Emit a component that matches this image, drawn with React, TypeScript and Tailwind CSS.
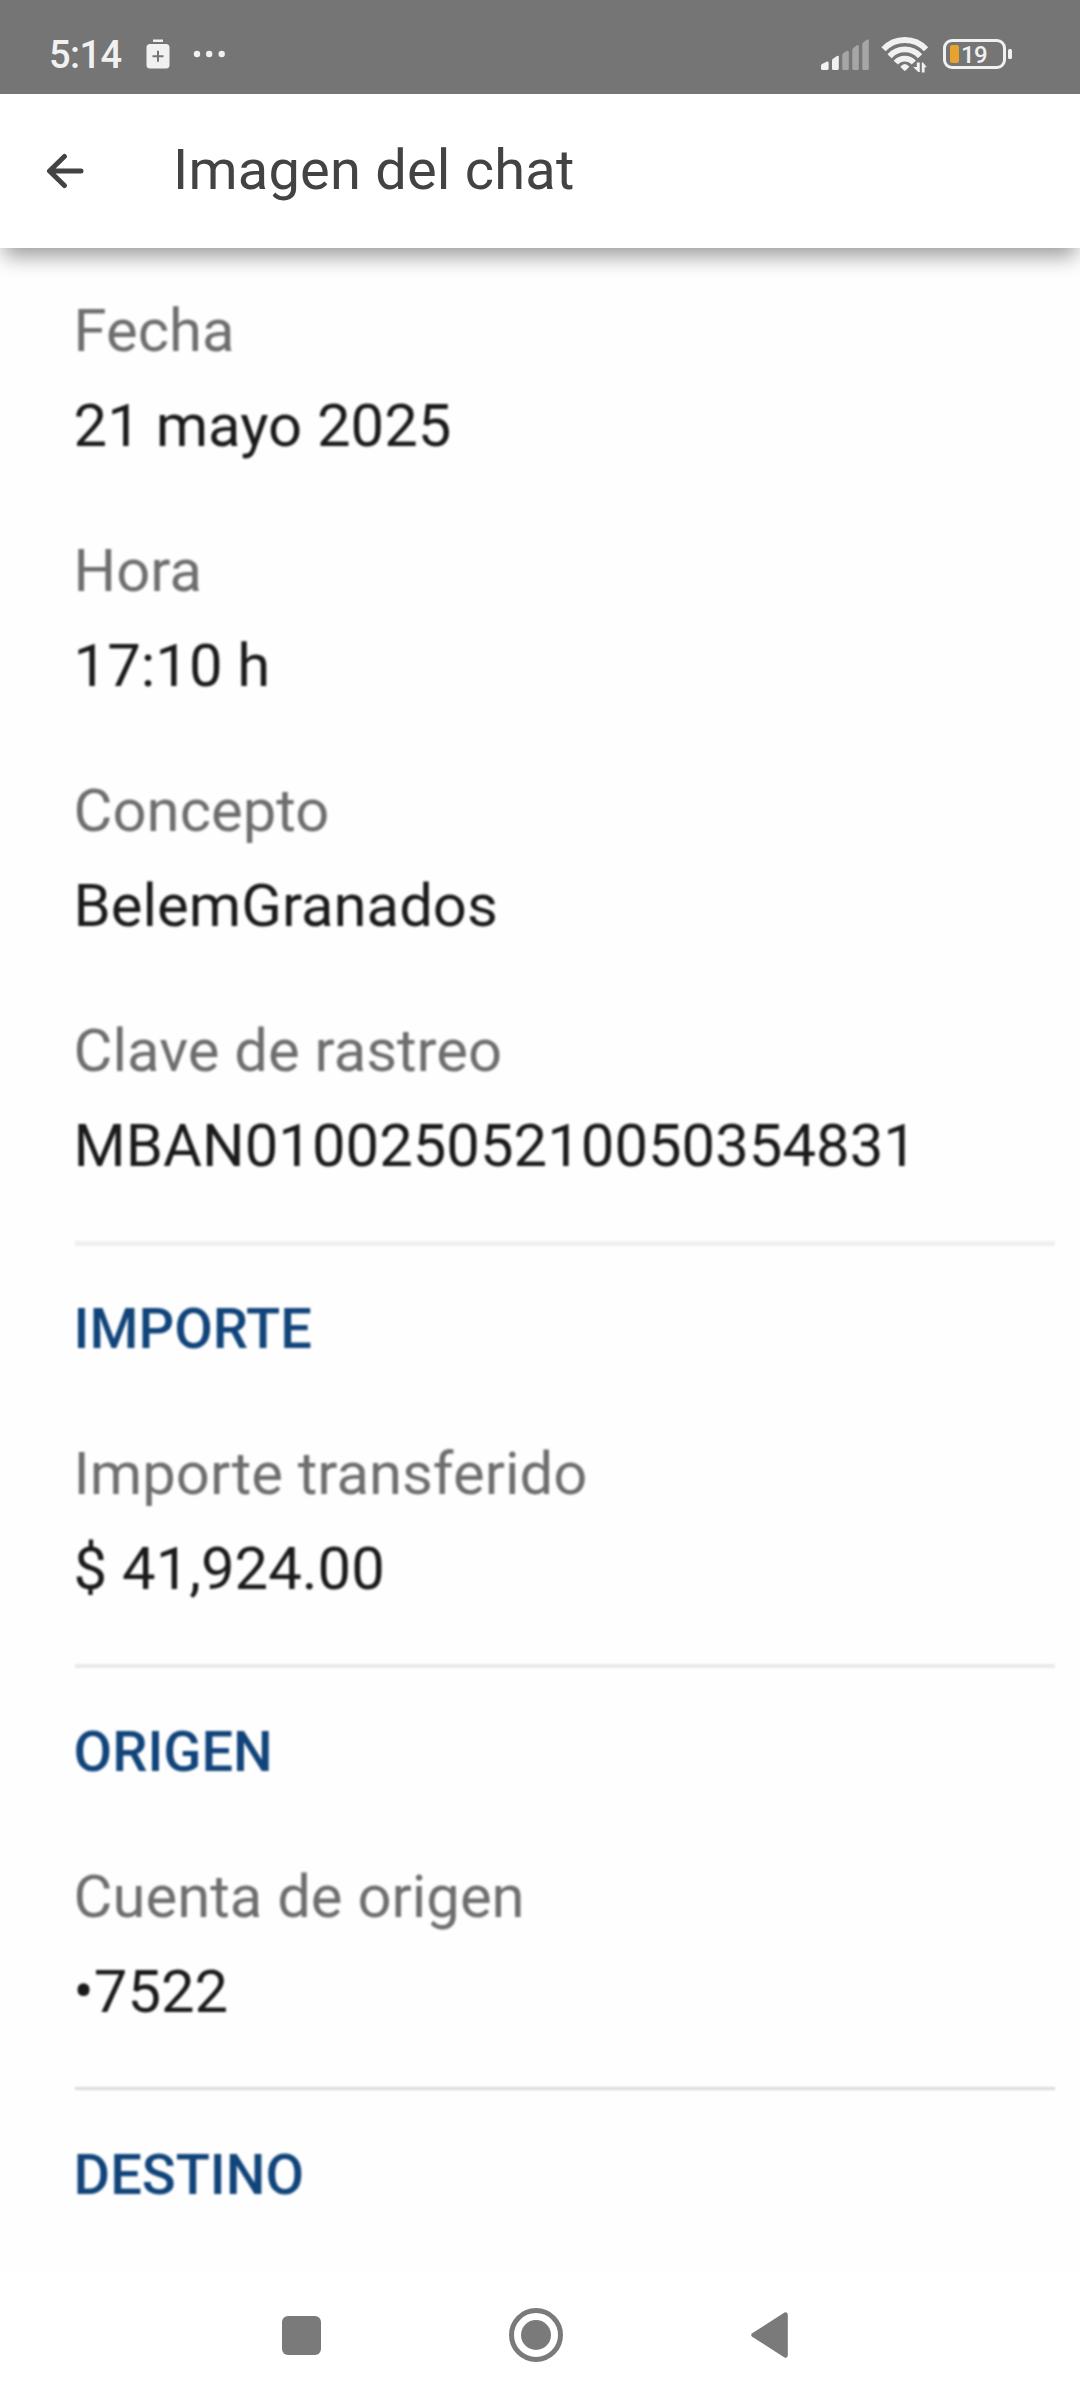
import React from "react";

type Item = { label: string; value: string };
type Section = { title?: string; line?: string; items: Item[] };

const sections: Section[] = [
  {
    items: [
      { label: "Fecha", value: "21 mayo 2025" },
      { label: "Hora", value: "17:10 h" },
      { label: "Concepto", value: "BelemGranados" },
      { label: "Clave de rastreo", value: "MBAN01002505210050354831" },
    ],
  },
  {
    title: "IMPORTE",
    line: "h-[5px] bg-[#efefef]",
    items: [{ label: "Importe transferido", value: "$ 41,924.00" }],
  },
  {
    title: "ORIGEN",
    line: "h-[4px] mb-px bg-[#e9e9e9]",
    items: [{ label: "Cuenta de origen", value: "•7522" }],
  },
  { title: "DESTINO", line: "h-[3px] mb-[2px] bg-[#dadada]", items: [] },
];

function StatusBar() {
  return (
    <div className="relative z-20 flex h-[94px] shrink-0 items-start justify-between bg-[#757575] pl-[49px] pr-[68px] pt-[35px] text-[#f1f1f1]">
      <div className="flex">
        <span className="w-[97px] text-[38px] leading-[41px] font-medium tracking-[-0.6px]">5:14</span>
        <svg width="24" height="36" viewBox="146 35 24 36">
          <rect x="153" y="39.5" width="10" height="2.5" fill="currentColor" />
          <rect x="146.5" y="44" width="23" height="24.5" rx="3.5" fill="currentColor" />
          <path d="M152.5 56.2h11M158 50.7v11" stroke="#757575" strokeWidth="2" />
        </svg>
        <svg className="ml-[23px]" width="34" height="36" viewBox="193 35 34 36">
          <circle cx="197" cy="54" r="3.2" fill="currentColor" />
          <circle cx="209.2" cy="54" r="3.2" fill="currentColor" />
          <circle cx="221.7" cy="54" r="3.2" fill="currentColor" />
        </svg>
      </div>
      <div className="flex">
        <svg width="50" height="40" viewBox="820 35 50 40">
          <path d="M821 65.5 Q821 64.5 822 64 L827 61.6 Q828.6 61.2 828.6 63 V68.5 Q828.6 70 827 70 H822.5 Q821 70 821 68.5Z" fill="currentColor" />
          <path d="M832 60.5 Q832 59.4 833 58.7 L837 56 Q838.8 55.3 838.8 57 V68.5 Q838.8 70 837.4 70 H833.5 Q832 70 832 68.5Z" fill="currentColor" />
          <path d="M842.3 55 Q842.3 54 843.2 53.2 L847 50.8 Q848.8 50.2 848.8 52 V68.5 Q848.8 70 847.4 70 H843.6 Q842.3 70 842.3 68.5Z" fill="#a6a6a6" />
          <path d="M852.3 50 Q852.3 48.8 853.2 48 L857 45.2 Q858.8 44.5 858.8 46.3 V68.5 Q858.8 70 857.4 70 H853.6 Q852.3 70 852.3 68.5Z" fill="#a6a6a6" />
          <path d="M862.3 44.6 Q862.3 43.4 863.2 42.6 L867 39.6 Q868.8 39 868.8 40.8 V68.5 Q868.8 70 867.4 70 H863.6 Q862.3 70 862.3 68.5Z" fill="#a6a6a6" />
        </svg>
        <svg className="ml-[11px]" width="48" height="40" viewBox="881 35 48 40">
          <g fill="none" stroke="currentColor" strokeWidth="5.8">
            <path d="M883.5 49.3 A29 29 0 0 1 926.1 49.3" />
            <path d="M889.6 56.2 A20.4 20.4 0 0 1 920 56.2" />
            <path d="M895.8 62.6 A12 12 0 0 1 913.8 62.6" />
          </g>
          <path d="M900.3 66.8 Q904.8 61.3 909.4 66.8 L905.6 70.6 Q904.8 71.2 904 70.6Z" fill="currentColor" />
          <path d="M911 74 V65.5 L916.5 60.5 H929 V74Z" fill="#757575" />
          <path d="M919.8 62.5 V72 H918.2 L913.2 67 H916.8 V62.5Z" fill="currentColor" />
          <path d="M921.8 72.5 V62.5 H923 L926.8 67.3 H924.6 V72.5Z" fill="currentColor" />
        </svg>
        <div className="ml-[14px] flex items-center self-start pt-[4px]">
          <div className="flex h-[30px] w-[63px] items-center rounded-[9px] border-3 border-current pl-[4px]">
            <div className="h-[18px] w-[9px] rounded-[2px] bg-[#e8a22e]" />
            <span className="ml-[2px] pt-[2px] text-[24px] leading-[24px] font-medium tracking-[-0.6px]">19</span>
          </div>
          <div className="ml-[2px] h-[10px] w-[4px] rounded-[1.5px] bg-current" />
        </div>
      </div>
    </div>
  );
}

function Header() {
  return (
    <header className="relative z-10 flex h-[154px] shrink-0 items-center bg-white pl-[46px] text-[#434343] shadow-[0_12px_20px_-4px_rgba(0,0,0,0.4)]">
      <svg width="40" height="40" viewBox="0 0 40 40" fill="none" stroke="currentColor" strokeWidth="5" strokeLinecap="round" strokeLinejoin="round">
        <path d="M35 20H4M18.4 5.5L3.5 20L18.4 34.5" />
      </svg>
      <h1 className="ml-[87px] pb-[2px] text-[56px] leading-[70px] tracking-[0.2px]">Imagen del chat</h1>
    </header>
  );
}

function Field({ label, value }: Item) {
  return (
    <div className="text-[59.8px]">
      <div className="leading-[96px] text-[#6e6e6e]">{label}</div>
      <div className="leading-[94px] text-[#1a1a1a]">{value}</div>
    </div>
  );
}

function NavBar() {
  return (
    <nav className="flex h-[130px] shrink-0 items-center bg-white pl-[282px] text-[#7a7a7a]">
      <div className="size-[39px] rounded-[6px] bg-current" />
      <div className="ml-[188px] flex size-[54px] items-center justify-center rounded-full border-5 border-current">
        <div className="size-[30px] rounded-full bg-current" />
      </div>
      <svg className="ml-[188px]" width="37" height="46" viewBox="0 0 37 46" fill="currentColor">
        <path d="M1.2 21.2 L33.5 0.6 Q36.8 -0.5 36.8 3 V43 Q36.8 46.5 33.5 45.4 L1.2 24.8 Q-0.8 23 1.2 21.2Z" />
      </svg>
    </nav>
  );
}

export default function App() {
  return (
    <div className="flex h-[2400px] w-[1080px] flex-col overflow-hidden bg-white font-['Roboto',sans-serif]">
      <StatusBar />
      <Header />
      <main className="flex-1 overflow-hidden bg-[#fefefe] pt-[35px] pr-[25px] pl-[73.6px] blur-[0.8px]">
        {sections.map((section, i) => (
          <section key={i}>
            {section.title && (
              <>
                <div className="flex flex-col pt-[48px] pl-[1.4px]">
                  <div className={section.line} />
                </div>
                <h2 className="mt-[45px] mb-[59px] text-[56px] leading-[76px] font-medium text-[#10447a]">
                  {section.title}
                </h2>
              </>
            )}
            <div className="flex flex-col gap-[50px]">
              {section.items.map((item) => (
                <Field key={item.label} label={item.label} value={item.value} />
              ))}
            </div>
          </section>
        ))}
      </main>
      <NavBar />
    </div>
  );
}
